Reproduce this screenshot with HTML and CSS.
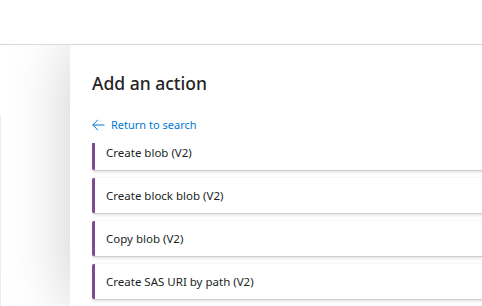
FILE: index.html
```html
<!DOCTYPE html>
<html lang="en">
<head>
<meta charset="utf-8">
<link rel="stylesheet" href="styles.css">
</head>
<body>
<div class="header"></div>
<div class="main">
  <div class="side"><div class="side-line"></div></div>
  <div class="panel">
    <h1 class="title">Add an action</h1>
    <a class="back" href="#">
      <svg class="back-icon" width="13" height="12" viewBox="0 0 13 12"><path d="M6 0.8 L0.8 6 L6 11.2 M0.8 6 H12.5" fill="none" stroke="#0078d4" stroke-width="1"/></svg>
      <span>Return to search</span>
    </a>
    <div class="list">
      <div class="list-inner">
        <div class="card">Create blob (V2)</div>
        <div class="card">Create block blob (V2)</div>
        <div class="card">Copy blob (V2)</div>
        <div class="card">Create SAS URI by path (V2)</div>
      </div>
    </div>
  </div>
</div>
</body>
</html>
```
FILE: styles.css
```css
html, body {
  margin: 0;
  padding: 0;
  width: 482px;
  height: 306px;
  overflow: hidden;
  background: #fff;
  font-family: "Noto Sans", "Open Sans", sans-serif;
}
.header {
  height: 44px;
  border-bottom: 1px solid #d9d9d9;
  background: #fff;
  position: relative;
  z-index: 2;
}
.main {
  display: flex;
  height: 261px;
}
.side {
  width: 70px;
  flex: none;
  padding-top: 70px;
  box-sizing: border-box;
}
.side-line {
  width: 1px;
  height: 100%;
  background: #ececec;
}
.panel {
  flex: 1;
  background: #fff;
  box-shadow: 0 0 60px rgba(0, 0, 0, 0.2);
  position: relative;
  z-index: 1;
  padding: 26px 0 0 22px;
  display: flex;
  flex-direction: column;
  min-width: 0;
}
.title {
  margin: 0;
  font-size: 17.5px;
  line-height: 24px;
  font-weight: 500;
  color: #252423;
}
.back {
  margin-top: 22px;
  display: flex;
  align-items: center;
  gap: 6px;
  color: #0078d4;
  text-decoration: none;
  font-size: 11px;
  line-height: 16px;
}
.back-icon {
  flex: none;
}
.list {
  margin-top: 10px;
  flex: 1;
  overflow: hidden;
}
.list-inner {
  margin-top: -8px;
  width: 420px;
}
.card {
  height: 35px;
  box-sizing: border-box;
  border-left: 3px solid #804998;
  border-radius: 2px;
  background: #fff;
  box-shadow: 0 1.6px 3.6px rgba(0, 0, 0, 0.13), 0 0.3px 0.9px rgba(0, 0, 0, 0.11);
  margin-bottom: 8px;
  padding-left: 11px;
  display: flex;
  align-items: center;
  font-size: 11.5px;
  color: #201f1e;
}
```
